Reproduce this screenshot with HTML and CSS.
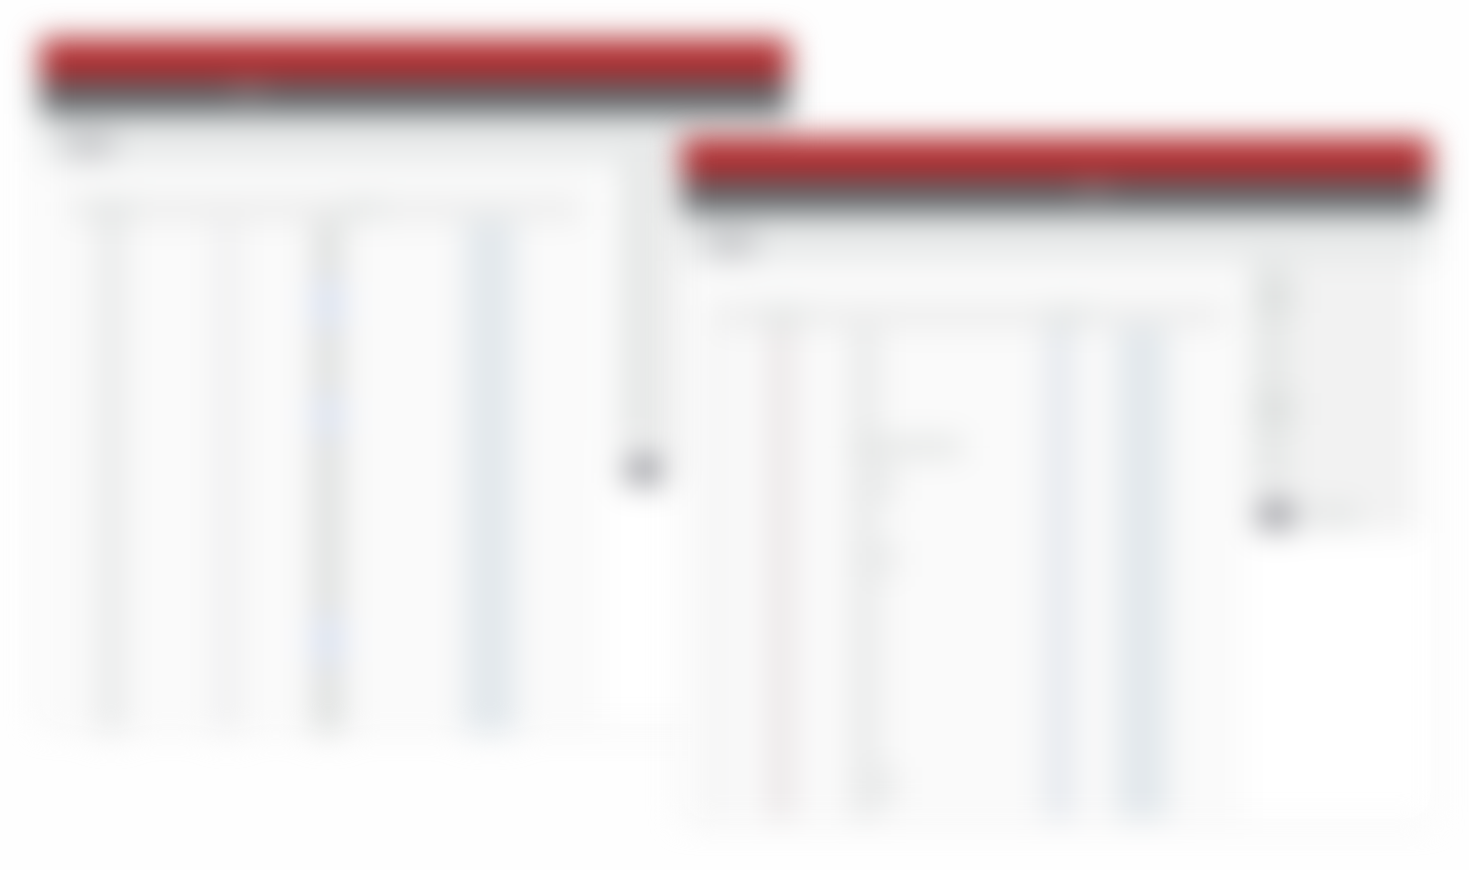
FILE: index.html
```html
<!DOCTYPE html>
<html lang="en">
<head>
<meta charset="utf-8">
<title>Windows</title>
<link rel="stylesheet" href="styles.css">
</head>
<body>
<main class="desktop">
  <section class="window window-back">
    <header class="titlebar"></header>
    <nav class="toolbar"><i></i></nav>
    <div class="subbar"><span class="crumb"></span></div>
    <div class="body">
      <div class="list">
        <div class="list-head"><i></i><i></i></div>
        <div class="columns columns-back">
          <div class="col soft"></div>
          <div class="col faint"></div>
          <div class="col medium tags"><b></b><b></b><b></b></div>
          <div class="col blue"></div>
        </div>
      </div>
      <aside class="side side-back">
        <div class="side-text"></div>
        <div class="actions"><button class="submit" type="button" aria-label="Apply"></button></div>
      </aside>
    </div>
  </section>

  <section class="window window-front">
    <header class="titlebar"></header>
    <nav class="toolbar"><i></i></nav>
    <div class="subbar"><span class="crumb"></span></div>
    <div class="body">
      <div class="list">
        <div class="list-head"><i></i><i></i></div>
        <div class="columns columns-front">
          <div class="col faint"></div>
          <div class="col pink"></div>
          <div class="col soft entries"><b class="long"></b><b></b><b></b><b></b></div>
          <div class="col pale"></div>
          <div class="col blue"></div>
        </div>
      </div>
      <aside class="side side-front">
        <div class="side-text"><i></i><i></i></div>
        <div class="actions"><button class="submit" type="button" aria-label="Apply"></button><span class="hint"></span></div>
      </aside>
    </div>
  </section>
</main>
</body>
</html>
```

FILE: styles.css
```css
* { box-sizing: border-box; }

body {
  margin: 0;
  background: #fefefe;
  font-family: "Liberation Sans", Arial, sans-serif;
}

.desktop {
  position: relative;
  min-height: 100vh;
  overflow: hidden;
}

.window {
  position: absolute;
  width: 51%;
  background: #fff;
  box-shadow: 0 4px 20px rgba(0, 0, 0, 0.05);
  filter: blur(15px);
}

.window-back { left: 2.7%; top: 39px; }
.window-front { left: 46.4%; top: 138px; }

.titlebar { height: 40px; background: #b0282b; }

.toolbar {
  height: 35px;
  padding: 4px 0 0 26%;
  background: #5e6366;
}

.toolbar i { display: block; width: 30px; height: 14px; background: #858082; }
.window-front .toolbar { padding-left: 53%; }

.subbar {
  display: flex;
  align-items: flex-start;
  height: 48px;
  padding: 18px 26px 0;
  background: #e8eaea;
}

.crumb { width: 48px; height: 26px; background: #c4c5c8; }

.body {
  display: flex;
  align-items: flex-start;
  background: #fff;
}

.list {
  width: 75%;
  padding: 36px 20px 0 30px;
  background: #fafafa;
}

.list-head {
  display: flex;
  justify-content: space-between;
  height: 22px;
  padding: 0 200px 0 22px;
  background: #ececec;
}

.list-head i { width: 40px; background: #e2e5e4; }

.window-front .list { padding-top: 44px; }
.window-front .list-head { padding: 0 136px 0 52px; }

.columns { display: grid; height: 504px; }
.window-front .columns { height: 492px; }

.columns-back {
  grid-template-columns: 26fr 30fr 88fr 26fr 72fr 32fr 120fr 52fr 66fr;
}
.columns-back .soft { grid-column: 2; }
.columns-back .faint { grid-column: 4; }
.columns-back .medium { grid-column: 6; }
.columns-back .blue { grid-column: 8; }

.columns-front {
  grid-template-columns:
    12fr 42fr 30fr 54fr minmax(0, 30fr) 164fr 30fr 42fr 52fr 56fr;
}
.columns-front .faint { grid-column: 1; }
.columns-front .pink { grid-column: 3; }
.columns-front .soft { grid-column: 5; }
.columns-front .pale { grid-column: 7; }
.columns-front .blue { grid-column: 9; }

.soft { background: #eaebeb; }
.faint { background: #f0f0f1; }
.medium { background: #dfe1e0; }
.blue { background: #e2e8ec; }
.pale { background: #e5e9ee; }
.pink { background: #ece8e9; }

.tags { display: flex; flex-direction: column; padding-top: 62px; }
.tags b { height: 44px; margin-bottom: 72px; background: #dbe2f2; }
.tags b:nth-child(2) { height: 36px; margin-bottom: 184px; }

.entries { display: flex; flex-direction: column; padding-top: 110px; }
.entries b { width: 46px; height: 36px; margin-bottom: 40px; background: #e9eaea; }
.entries .long { width: 112px; height: 20px; margin-bottom: 8px; background: #e3e5e4; }
.entries b:nth-child(3) { margin-bottom: 190px; }
.entries b:last-child { margin-bottom: 0; }

.side { flex: 1; background: #f2f2f2; }
.side-back { margin-left: 16px; }
.side-front { margin: 0 14px 0 6px; }

.side-text { height: 278px; padding: 20px 0; border-left: 40px solid #e6e8e7; }
.side-front .side-text { height: 224px; }
.side-text i {
  display: block;
  width: 40px;
  height: 32px;
  margin: 0 0 80px -36px;
  background: #dcdfde;
}

.actions { display: flex; align-items: center; gap: 16px; padding: 16px 8px 4px; }

.submit {
  width: 36px;
  height: 28px;
  padding: 0;
  border: 0;
  background: #9a9ba1;
}

.hint { width: 48px; height: 18px; background: #e0e3e2; }
```
